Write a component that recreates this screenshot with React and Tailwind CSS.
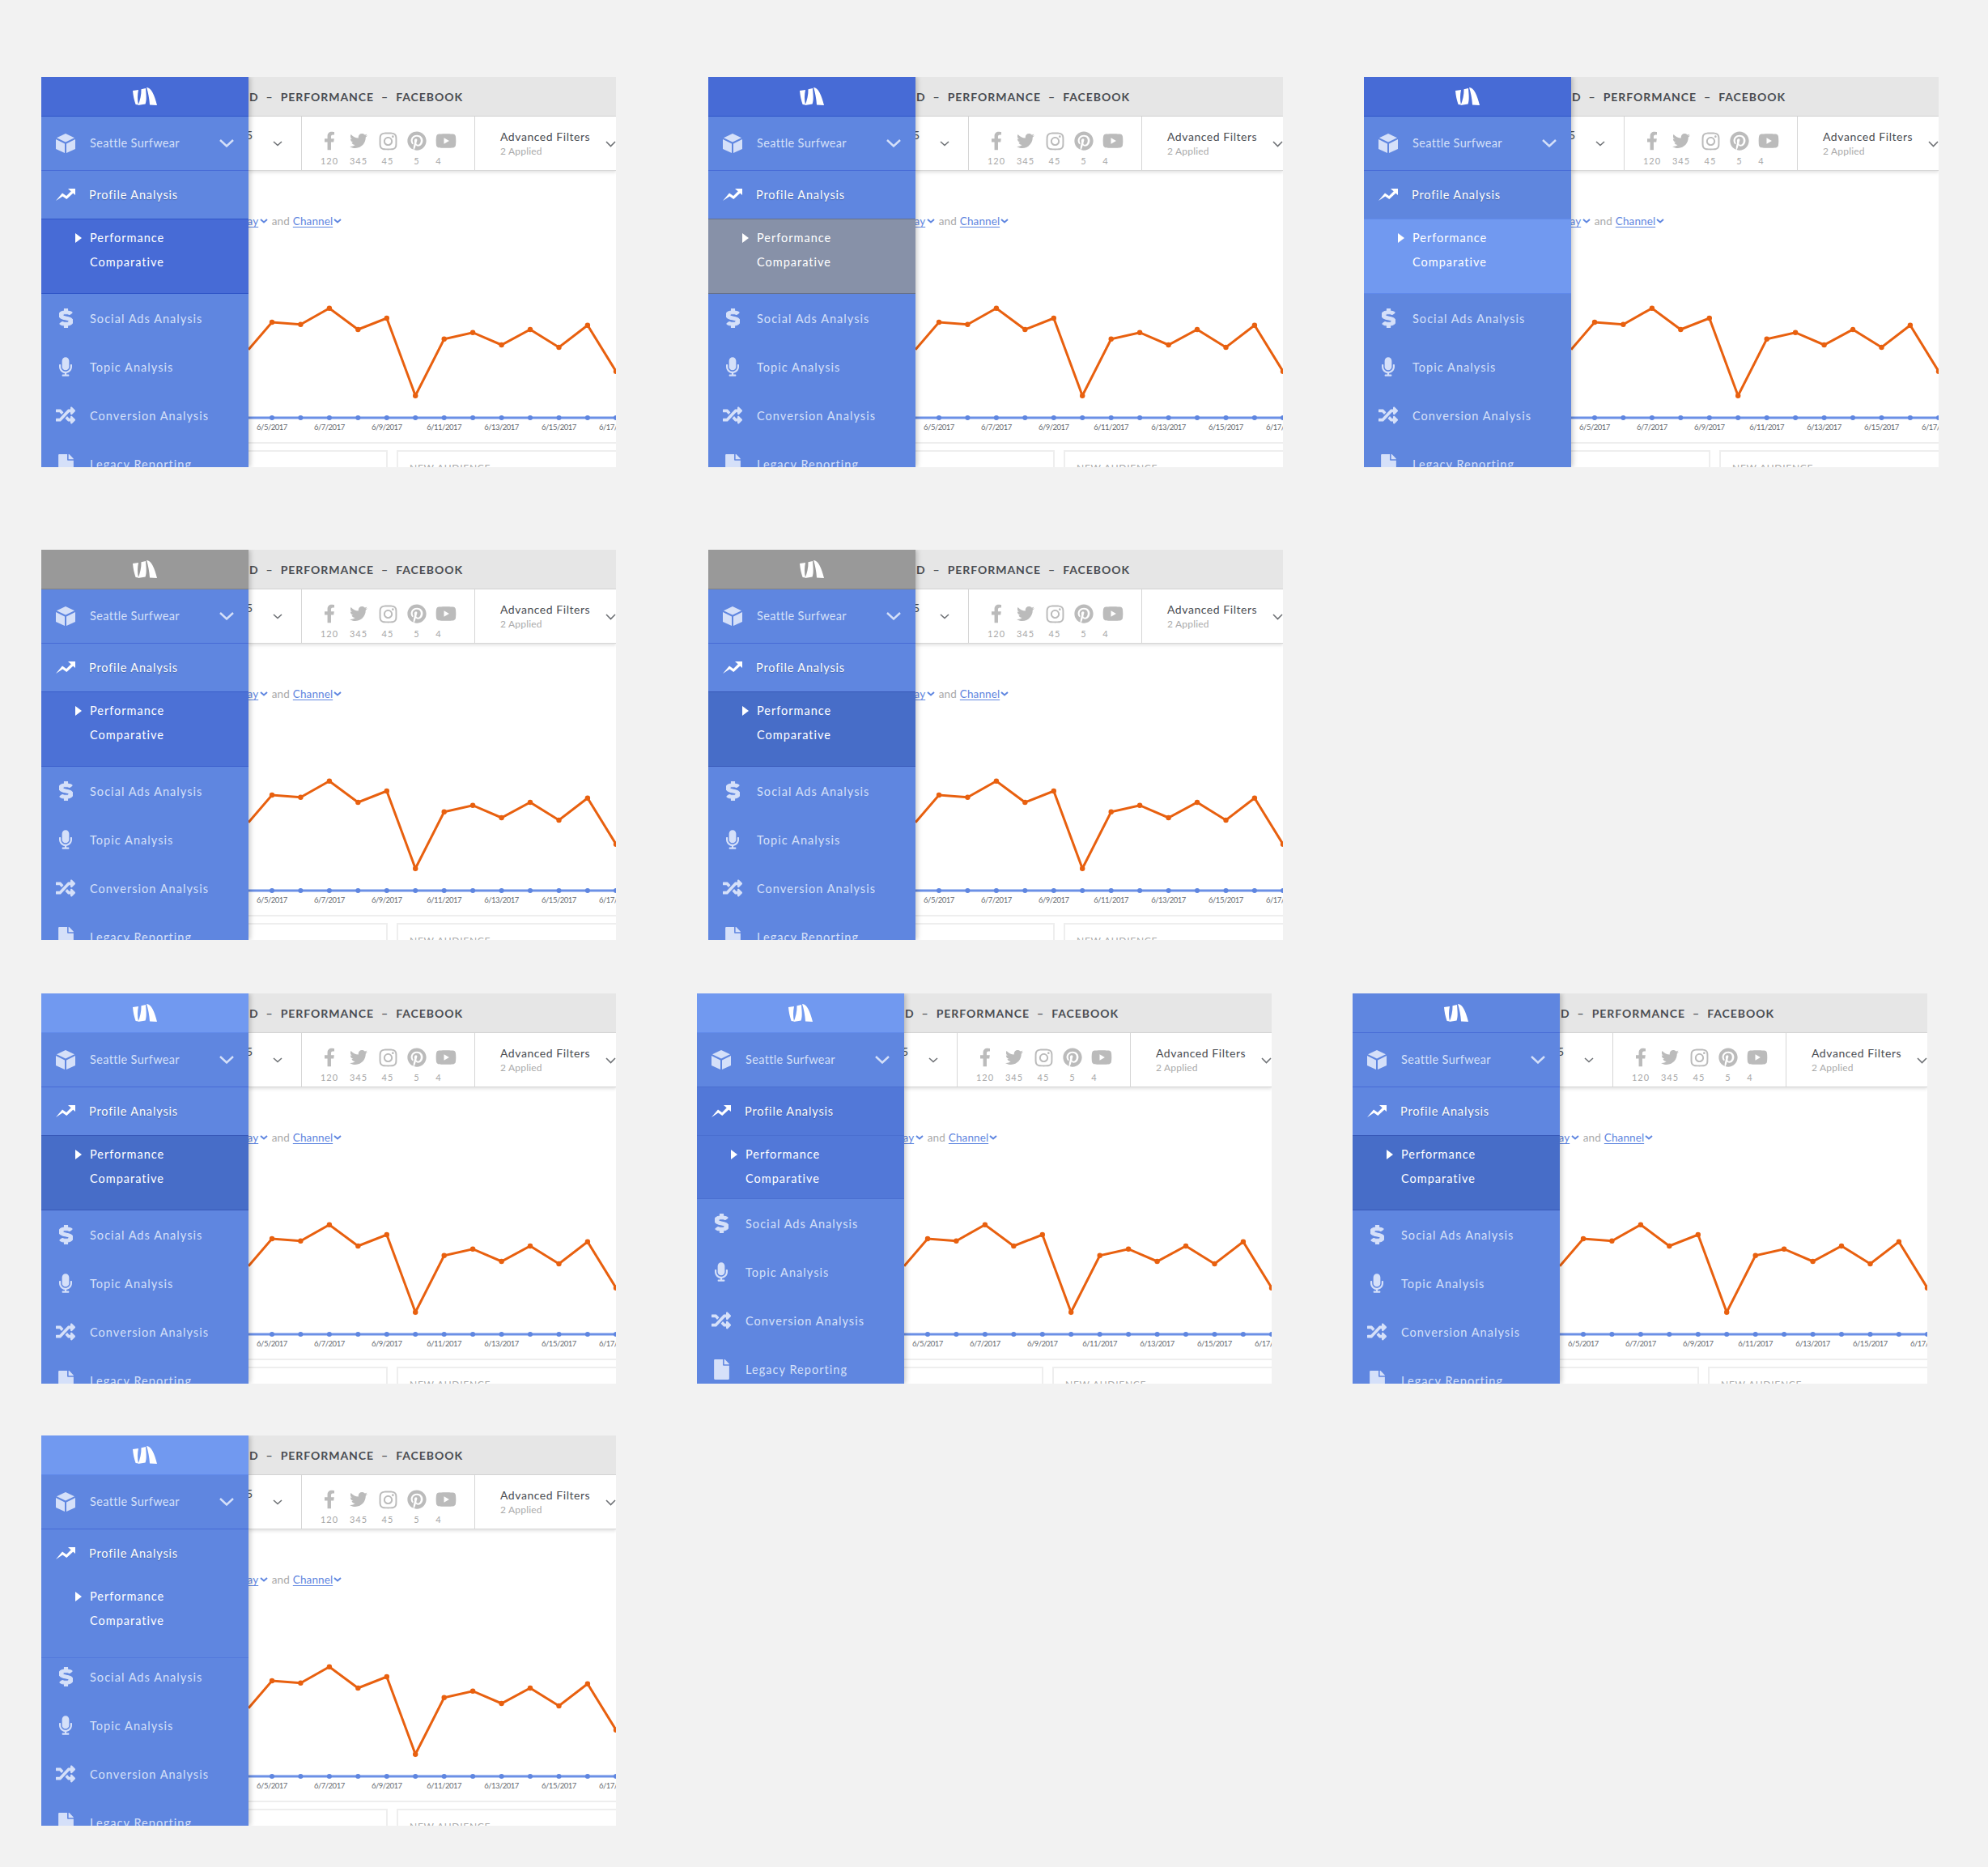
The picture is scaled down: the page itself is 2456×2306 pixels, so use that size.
import { FaDollarSign, FaMicrophone, FaRandom, FaFile, FaFacebookF, FaTwitter, FaInstagram, FaPinterest, FaYoutube } from 'react-icons/fa'

const FONT = "font-['Lato','Open_Sans',sans-serif]"

// chart points, measured in content coordinates
const xs = [29, 64.4, 99.9, 135.3, 170.8, 206.2, 241.7, 277.1, 312.6, 348, 383.5, 418.9, 454]
const ys = [110, 112.7, 92.7, 119, 105, 200.7, 130.7, 122.7, 138, 119, 141, 113.7, 170.7]
const linePoints = '0,143.7 ' + xs.map((x, i) => `${x},${ys[i]}`).join(' ')
const dates = ['6/5/2017', '6/7/2017', '6/9/2017', '6/11/2017', '6/13/2017', '6/15/2017', '6/17/2017']

function Logo() {
  return (
    <svg width="30" height="22" viewBox="0 0 30 22" fill="#fff">
      <path d="M0 4 L7 3 C5.8 9 5.6 15 7 21.5 L3.6 21 C1.8 16 .5 10 0 4Z" />
      <path d="M10.5 2.2 L16 1 C16.4 8 17.6 15 15.6 20.4 L6.5 22 C9 16 10.8 9 10.5 2.2Z" />
      <path d="M17 0 C23 0 27 10 30 22 L21 21.5 C20.6 14 19 6 17 0Z" />
    </svg>
  )
}

function Cube() {
  return (
    <svg width="24" height="24" viewBox="0 0 24 24" fill="#d5e0f9">
      <path d="M12 0 L23 5.2 L12 10.5 L1 5.2Z" />
      <path d="M0 7 L11 12.4 V24 L0 19Z" />
      <path d="M13 12.4 L24 7 V19 L13 24Z" />
    </svg>
  )
}

function TrendUp() {
  return (
    <svg width="24" height="15" viewBox="0 0 24 15" fill="#fff">
      <path d="M0 15 L8 5.5 L13 9 L19.5 2.5 L22 5 L13.3 13 L8.3 9.5Z" />
      <path d="M15 0 H24 V8Z" />
    </svg>
  )
}

function Chevron({ w, h, color, stroke }) {
  return (
    <svg width={w} height={h} viewBox={`0 0 ${w} ${h}`} fill="none" stroke={color} strokeWidth={stroke}>
      <polyline points={`1,1 ${w / 2},${h - 1.5} ${w - 1},1`} />
    </svg>
  )
}

function NavItem({ icon, label }) {
  return (
    <div className="flex h-[60px] shrink-0 items-center">
      <div className="flex w-[60px] shrink-0 justify-center text-[#d5e0f9]">{icon}</div>
      <span className="pt-[1px] text-[14.5px] tracking-[1.05px] text-[#d5e0f9]">{label}</span>
    </div>
  )
}

function Sidebar({ v }) {
  return (
    <div className={`z-10 flex w-[256px] shrink-0 flex-col overflow-hidden shadow-[2px_0_6px_rgba(0,0,0,0.22)] ${v.body}`}>
      <div className={`flex h-[49px] shrink-0 items-center justify-center border-b ${v.head}`}>
        <Logo />
      </div>
      <div className={`flex h-[67px] shrink-0 items-center border-b ${v.account}`}>
        <div className="flex w-[60px] shrink-0 justify-center"><Cube /></div>
        <span className="text-[14.5px] tracking-[0.35px] text-[#d5e0f9]">Seattle Surfwear</span>
        <div className="ml-auto mr-[18px]"><Chevron w={18} h={10} color="#d5e0f9" stroke={2.4} /></div>
      </div>
      <div className={`flex h-[60px] shrink-0 items-center border-b ${v.profile}`}>
        <div className="ml-[18px] mr-[17px] w-[24px] shrink-0"><TrendUp /></div>
        <span className="pt-[1px] text-[14.5px] tracking-[0.85px] text-white [text-shadow:0_1px_1px_rgba(0,0,0,0.25)]">Profile Analysis</span>
      </div>
      <div className={`flex shrink-0 flex-col border-b pt-[8px] text-[14.5px] leading-[30px] tracking-[1px] text-white ${v.sub}`}>
        <div className="flex items-center pl-[42px]">
          <svg width="8" height="12" viewBox="0 0 8 12" fill="#fff" className="mr-[10px]"><path d="M0 0 L8 6 L0 12Z" /></svg>
          Performance
        </div>
        <div className="pl-[60px]">Comparative</div>
      </div>
      <div className={v.items}>
        <NavItem icon={<FaDollarSign preserveAspectRatio="none" stroke="currentColor" strokeWidth="24" className="h-[24px] w-[17px]" />} label="Social Ads Analysis" />
        <NavItem icon={<FaMicrophone className="h-[24px] w-[16px]" />} label="Topic Analysis" />
        <NavItem icon={<FaRandom className="h-[24px] w-[24px]" />} label="Conversion Analysis" />
        <NavItem icon={<FaFile className="h-[25px] w-[19px]" />} label="Legacy Reporting" />
      </div>
    </div>
  )
}

function Social({ icon, count, countClass }) {
  return (
    <div className="flex w-[36px] flex-col items-center text-[#bbbbbb]">
      <div className="flex h-[24px] items-center justify-center">{icon}</div>
      <span className={`mt-[6px] text-[11px] leading-[13px] tracking-[1px] text-[#a8a8a8] ${countClass || ''}`}>{count}</span>
    </div>
  )
}

function Content() {
  return (
    <div className="flex min-w-0 flex-1 flex-col overflow-hidden bg-white">
      <div className="flex h-[49px] shrink-0 items-center gap-[9px] whitespace-nowrap border-b border-[#d6d6d6] bg-[#e6e6e6] pl-[1px] pt-[1px] text-[14px] font-bold tracking-[0.95px] text-[#4a4d52]">
        <span>D</span><span>–</span><span>PERFORMANCE</span><span>–</span><span>FACEBOOK</span>
      </div>
      <div className="z-[1] flex h-[67px] shrink-0 border-b border-[#d6d6d6] bg-white shadow-[0_2px_4px_rgba(0,0,0,0.12)]">
        <div className="flex w-[66px] shrink-0 border-r border-[#d6d6d6]">
          <span className="ml-[-3px] mt-[15px] text-[14px] leading-[16px] text-[#4a4d52]">5</span>
          <div className="ml-[25px] mt-[30px]"><Chevron w={12} h={7} color="#6f7276" stroke={1.6} /></div>
        </div>
        <div className="flex w-[214px] shrink-0 border-r border-[#d6d6d6] pl-[16px] pt-[18px]">
          <Social icon={<FaFacebookF className="h-[24px] w-[14px]" />} count="120" />
          <Social icon={<FaTwitter className="h-[22px] w-[24px]" />} count="345" />
          <Social icon={<FaInstagram className="h-[25px] w-[25px]" />} count="45" />
          <Social icon={<FaPinterest className="h-[24px] w-[24px]" />} count="5" />
          <Social icon={<FaYoutube className="h-[24px] w-[26px]" />} count="4" countClass="mr-[18px]" />
        </div>
        <div className="flex flex-1 whitespace-nowrap pl-[31px] pt-[15px]">
          <div className="flex flex-col">
            <span className="text-[14px] leading-[20px] tracking-[0.55px] text-[#4a4d52]">Advanced Filters</span>
            <span className="text-[12px] leading-[16px] tracking-[0.2px] text-[#aaaaaa]">2 Applied</span>
          </div>
          <div className="ml-[19px] mt-[15px]"><Chevron w={13} h={8} color="#6f7276" stroke={1.6} /></div>
        </div>
      </div>
      <div className="mt-[47px] flex h-[30px] shrink-0 items-center whitespace-nowrap text-[13.5px] tracking-[0.1px]">
        <span className="ml-[-1.5px] text-[#5f86e0] underline underline-offset-2">ay</span>
        <span className="ml-[1.5px]"><Chevron w={10} h={6} color="#5f86e0" stroke={2} /></span>
        <span className="ml-[5px] text-[#aaaaaa]">and</span>
        <span className="ml-[4px] text-[#5f86e0] underline underline-offset-2">Channel</span>
        <span className="ml-[1px]"><Chevron w={10} h={6} color="#5f86e0" stroke={2} /></span>
      </div>
      <svg width="454" height="234" viewBox="0 0 454 234" className="shrink-0">
        <line x1="0" y1="228" x2="454" y2="228" stroke="#6b90e6" strokeWidth="3" />
        {xs.map(x => <circle key={x} cx={x} cy="228" r="3" fill="#5f86e0" />)}
        <polyline points={linePoints} fill="none" stroke="#e8600f" strokeWidth="3" />
        {xs.map((x, i) => <circle key={x} cx={x} cy={ys[i]} r="3.2" fill="#e8600f" />)}
      </svg>
      <div className="ml-[-6.5px] flex h-[12px] shrink-0 whitespace-nowrap text-[9.5px] leading-[12px] tracking-[-0.5px] text-[#666a70]">
        {dates.map(d => <span key={d} className="w-[70.9px] shrink-0 text-center">{d}</span>)}
      </div>
      <div className="mt-[12px] shrink-0 border-t-2 border-[#eeeeee]" />
      <div className="mt-[8px] flex h-[40px] shrink-0 gap-[11px]">
        <div className="w-[172px] shrink-0 border-r-2 border-t-2 border-[#eeeeee]" />
        <div className="flex-1 whitespace-nowrap border-l-2 border-t-2 border-[#eeeeee] pl-[14px] pt-[12px] text-[12px] leading-[16px] tracking-[0.75px] text-[#aaaaaa]">NEW AUDIENCE</div>
      </div>
    </div>
  )
}

function Frame({ v, className }) {
  return (
    <div className={`flex h-[482px] w-[710px] shrink-0 overflow-hidden ${className || ''}`}>
      <Sidebar v={v} />
      <Content />
    </div>
  )
}

const BODY = 'bg-[#5f86e0]'
const ACCOUNT = 'border-[#476bd6] bg-[#5f86e0]'
const PROFILE = 'border-[#2f55c8] bg-[#5f86e0]'
const DEFAULT_SUB = 'h-[92px] border-[#3859b8] bg-[#476dc8]'

const variants = {
  a: { body: BODY, head: 'border-[#2f55c8] bg-[#476bd6]', account: ACCOUNT, profile: PROFILE, sub: 'h-[92px] border-[#2f55c8] bg-[#476bd6]' },
  b: { body: BODY, head: 'border-[#2f55c8] bg-[#476bd6]', account: ACCOUNT, profile: 'border-[#66718a] bg-[#5f86e0]', sub: 'h-[92px] border-[#66718a] bg-[#8791a8]' },
  c: { body: 'bg-[#5f86de]', head: 'border-[#2f55c8] bg-[#476bd6]', account: ACCOUNT, profile: 'border-[#6089ea] bg-[#5f86de]', sub: 'h-[92px] border-[#6089ea] bg-[#7199f0]' },
  d: { body: BODY, head: 'border-[#808080] bg-[#999999]', account: ACCOUNT, profile: 'border-[#3a5ecb] bg-[#5f86e0]', sub: 'h-[92px] border-[#3a5ecb] bg-[#4c71d6]' },
  e: { body: BODY, head: 'border-[#808080] bg-[#999999]', account: ACCOUNT, profile: 'border-[#3859b8] bg-[#5f86e0]', sub: DEFAULT_SUB },
  f: { body: BODY, head: 'border-[#6089ea] bg-[#7199f0]', account: ACCOUNT, profile: 'border-[#3859b8] bg-[#5f86e0]', sub: DEFAULT_SUB },
  g: { body: BODY, head: 'border-[#6089ea] bg-[#7199f0]', account: 'border-[#4a6fd0] bg-[#5f86e0]', profile: 'border-[#4a6fd0] bg-[#5278d8]', sub: 'h-[78px] border-[#4a6fd0] bg-[#5278d8]' },
  h: { body: BODY, head: 'border-[#476bd6] bg-[#5f86e0]', account: ACCOUNT, profile: 'border-[#3859b8] bg-[#5f86e0]', sub: DEFAULT_SUB },
  i: { body: BODY, head: 'border-[#6089ea] bg-[#7199f0]', account: ACCOUNT, profile: 'border-[#5f86e0] bg-[#5f86e0]', sub: 'h-[99px] border-[#5379dc] bg-[#5f86e0]', items: 'mt-[-7px]' },
}

export default function App() {
  return (
    <div className={`min-h-[2306px] bg-[#f2f2f2] pl-[51px] pt-[95px] ${FONT}`}>
      <div className="flex">
        <Frame v={variants.a} />
        <Frame v={variants.b} className="ml-[114px]" />
        <Frame v={variants.c} className="ml-[100px]" />
      </div>
      <div className="mt-[102px] flex">
        <Frame v={variants.d} />
        <Frame v={variants.e} className="ml-[114px]" />
      </div>
      <div className="mt-[66px] flex">
        <Frame v={variants.f} />
        <Frame v={variants.g} className="ml-[100px]" />
        <Frame v={variants.h} className="ml-[100px]" />
      </div>
      <div className="mt-[64px] flex">
        <Frame v={variants.i} />
      </div>
    </div>
  )
}
